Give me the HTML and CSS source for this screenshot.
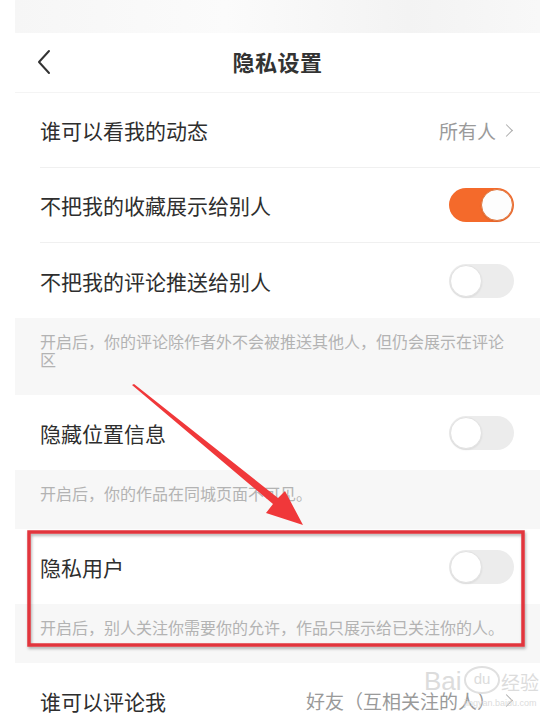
FILE: index.html
```html
<!DOCTYPE html>
<html lang="zh-CN">
<head>
    <meta charset="UTF-8">
    <meta name="viewport" content="width=device-width, initial-scale=1.0">
    <title>隐私设置</title>
    <link rel="stylesheet" href="styles.css">
</head>
<body>
    <div class="screen">
        <div class="status-bar"></div>

        <header class="nav">
            <svg class="back" width="16" height="26" viewBox="0 0 16 26">
                <polyline points="13,2 3,13 13,24" fill="none" stroke="#333" stroke-width="2" stroke-linecap="round" stroke-linejoin="round"/>
            </svg>
            <h1>隐私设置</h1>
        </header>

        <div class="row">
            <span class="label">谁可以看我的动态</span>
            <span class="value">所有人 <i class="chev"></i></span>
        </div>
        <div class="row">
            <span class="label">不把我的收藏展示给别人</span>
            <span class="switch on"></span>
        </div>
        <div class="row last">
            <span class="label">不把我的评论推送给别人</span>
            <span class="switch"></span>
        </div>
        <div class="desc">开启后，你的评论除作者外不会被推送其他人，但仍会展示在评论区</div>

        <div class="row last">
            <span class="label">隐藏位置信息</span>
            <span class="switch"></span>
        </div>
        <div class="desc">开启后，你的作品在同城页面不可见。</div>

        <div class="row last">
            <span class="label">隐私用户</span>
            <span class="switch"></span>
        </div>
        <div class="desc">开启后，别人关注你需要你的允许，作品只展示给已关注你的人。</div>

        <div class="row last">
            <span class="label">谁可以评论我</span>
            <span class="value">好友（互相关注的人） <i class="chev"></i></span>
        </div>
    </div>

    <div class="watermark">
        <span class="wm-bai">Bai</span>
        <span class="wm-paw">du</span>
        <span class="wm-jy">经验</span>
        <span class="wm-url">jingyan.baidu.com</span>
    </div>

    <!-- 标注：红色箭头和方框 -->
    <svg class="marks" width="559" height="727" viewBox="0 0 559 727">
        <defs>
            <filter id="shadow" x="-5%" y="-10%" width="110%" height="130%">
                <feDropShadow dx="1" dy="2" stdDeviation="1.5" flood-color="#000" flood-opacity="0.3"/>
            </filter>
        </defs>
        <polygon points="132,385 134,384 278,498 285,491 303,525 266,513 273,504" fill="#f0383a"/>
        <rect x="29" y="532" width="494" height="113" fill="none" stroke="#e2343c" stroke-width="3.5" filter="url(#shadow)"/>
    </svg>
</body>
</html>
```

FILE: styles.css
```css
body {
    margin: 0;
    background-color: #fff;
    font-family: "Noto Sans CJK SC", "Noto Sans", sans-serif;
    color: #333;
    position: relative;
    width: 559px;
    height: 727px;
    overflow: hidden;
}

.screen {
    width: 525px;
    margin-left: 15px;
    background-color: #fff;
}

.status-bar {
    height: 33px;
    background: linear-gradient(90deg, #f6f6f6 0%, #fbfbfb 40%, #f3f3f3 75%, #f8f8f8 100%);
}

.nav {
    height: 60px;
    padding-bottom: 4px;
    box-sizing: border-box;
    display: flex;
    align-items: center;
    justify-content: center;
    position: relative;
    border-bottom: 1px solid #f4f4f4;
}

.nav .back {
    position: absolute;
    left: 21px;
    top: 16px;
}

.nav h1 {
    margin: 0;
    font-size: 22px;
    font-weight: bold;
    color: #333;
    letter-spacing: 0.5px;
}

.row {
    height: 75px;
    margin-left: 25px;
    padding-right: 26px;
    display: flex;
    align-items: center;
    justify-content: space-between;
    border-bottom: 1px solid #f0f0f0;
    box-sizing: border-box;
}

.row.last {
    border-bottom: none;
}

.label {
    font-size: 21px;
    color: #2e2e2e;
}

.value {
    font-size: 19px;
    color: #9a9a9a;
    display: flex;
    align-items: center;
    gap: 6px;
}

.chev {
    width: 8px;
    height: 8px;
    border-top: 1.5px solid #aaa;
    border-right: 1.5px solid #aaa;
    transform: rotate(45deg);
    margin-right: 3px;
}

.switch {
    width: 65px;
    height: 34px;
    border-radius: 17px;
    background-color: #ececec;
    position: relative;
    box-sizing: border-box;
}

.switch::after {
    content: "";
    position: absolute;
    top: 1px;
    left: 1px;
    width: 32px;
    height: 32px;
    border-radius: 50%;
    background-color: #fff;
    box-sizing: border-box;
    border: 1px solid #e2e2e2;
    box-shadow: 0 1px 2px rgba(0, 0, 0, 0.08);
}

.switch.on {
    background-color: #f46a2b;
}

.switch.on::after {
    left: auto;
    right: 1px;
    border: 1.5px solid #e0773e;
    background-color: #fdfdfd;
}

.desc {
    background-color: #f7f7f7;
    padding: 14px 30px 27px 25px;
    font-size: 16px;
    line-height: 18px;
    color: #b3b3b3;
}

.watermark {
    position: absolute;
    left: 422px;
    top: 648px;
    width: 118px;
    height: 68px;
    color: #dcdcdc;
    font-family: "Liberation Sans", Arial, sans-serif;
    white-space: nowrap;
}

.wm-bai {
    position: absolute;
    left: 2px;
    top: 18px;
    font-size: 26px;
}

.wm-paw {
    position: absolute;
    left: 42px;
    top: 18px;
    width: 32px;
    height: 24px;
    border-radius: 50%;
    border: 2px solid #e0e0e0;
    font-size: 15px;
    text-align: center;
    line-height: 22px;
}

.wm-jy {
    position: absolute;
    left: 79px;
    top: 20px;
    font-size: 19px;
    font-family: "Noto Sans CJK SC", sans-serif;
}

.wm-url {
    position: absolute;
    left: 42px;
    top: 50px;
    font-size: 9px;
}

.marks {
    position: absolute;
    left: 0;
    top: 0;
    pointer-events: none;
}
```
